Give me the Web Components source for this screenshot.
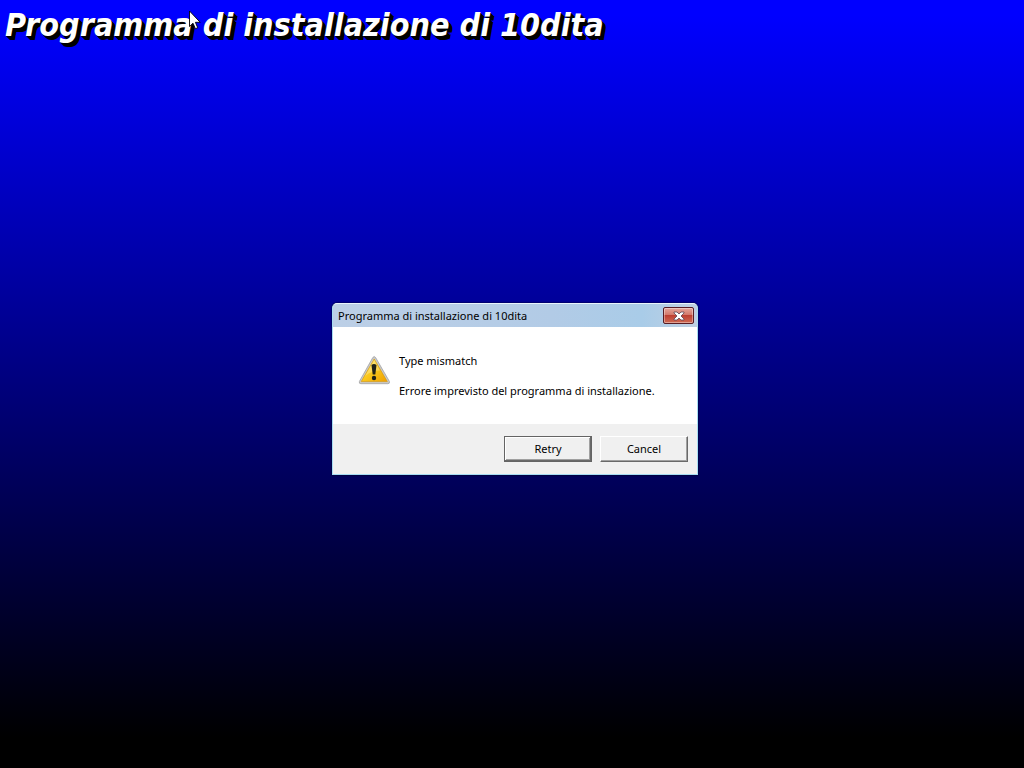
<!DOCTYPE html>
<html lang="it">
<head>
<meta charset="utf-8">
<title>Programma di installazione di 10dita</title>
<style>
  html, body { margin: 0; height: 100%; }
  body { overflow: hidden; font: 11px/16px "Noto Sans", "Open Sans", sans-serif; color: #000; }
</style>
</head>
<body>
<setup-screen>
  <setup-title slot="title">Programma di installazione di 10dita</setup-title>
  <message-dialog>
    <span slot="caption">Programma di installazione di 10dita</span>
    <warning-icon slot="icon"></warning-icon>
    <message-line>Type mismatch</message-line>
    <message-line>Errore imprevisto del programma di installazione.</message-line>
    <dialog-button slot="actions" default>Retry</dialog-button>
    <dialog-button slot="actions">Cancel</dialog-button>
  </message-dialog>
  <mouse-pointer slot="pointer"></mouse-pointer>
</setup-screen>

<script>
const define = (name, html) => {
  const template = document.createElement('template');
  template.innerHTML = html;
  customElements.define(name, class extends HTMLElement {
    constructor() {
      super();
      this.attachShadow({ mode: 'open' }).append(template.content.cloneNode(true));
    }
  });
};

define('setup-screen', `
  <style>
    :host {
      display: grid; position: relative; min-height: 100vh;
      background: linear-gradient(#00f 0, #00f 2%, #000 96%);
    }
    header, main { grid-area: 1 / 1; }
    header { padding: 6px 5px; }
    main { display: grid; place-items: center; padding: 10px 0 0 6px; }
  </style>
  <header><slot name="title"></slot></header>
  <main><slot></slot></main>
  <slot name="pointer"></slot>`);

define('setup-title', `
  <style>
    :host { display: block; }
    h1 {
      margin: 0; color: #fff;
      font: italic bold 32px/38px "DejaVu Sans Condensed", "DejaVu Sans", sans-serif;
      text-shadow: 1px 1px #000, 2px 2px #000, 3px 3px #000, 4px 4px #000;
    }
  </style>
  <h1><slot></slot></h1>`);

define('message-dialog', `
  <style>
    :host {
      display: block; box-sizing: border-box; width: 366px; max-width: 100%;
      border: 1px solid #a6dcf3; border-top-color: #e8f4fc; border-radius: 5px 5px 0 0;
      background: #fff; overflow: hidden;
      box-shadow: 0 0 2px #000;
    }
    .bar {
      display: flex; align-items: center; justify-content: space-between;
      height: 23px; padding: 0 3px 0 5px;
      background: linear-gradient(90deg, #bccfe6, #b2cbe6 60%, #a9cce8 85%, #bfd0e2);
    }
    button {
      display: grid; place-items: center; box-sizing: border-box;
      width: 31px; height: 17px; padding: 0;
      border: 1px solid #571d24; border-radius: 2px;
      background: linear-gradient(#e5a79c, #d3796b 45%, #bd4032 50%, #cf6a53);
      box-shadow: inset 0 0 0 1px #ffffff60;
    }
    .message { display: flex; gap: 8px; padding: 26px 25px 25px; }
    .text { display: grid; gap: 14px; }
    footer {
      display: flex; justify-content: flex-end; gap: 8px;
      padding: 12px 9px; background: #f0f0f0;
    }
  </style>
  <section role="alertdialog" aria-labelledby="caption">
    <div class="bar">
      <div id="caption"><slot name="caption"></slot></div>
      <button type="button" aria-label="Close">
        <svg width="12" height="10" viewBox="0 0 12 10" aria-hidden="true">
          <path d="M1 1h3l2 2 2-2h3v1L8 5l3 3v1H8L6 7 4 9H1V8l3-3-3-3z" fill="#fff" stroke="#5c4656" stroke-width=".8"/>
        </svg>
      </button>
    </div>
    <div class="message">
      <slot name="icon"></slot>
      <div class="text"><slot></slot></div>
    </div>
    <footer><slot name="actions"></slot></footer>
  </section>`);

define('message-line', `
  <style>:host { display: block; } p { margin: 0; }</style>
  <p><slot></slot></p>`);

define('warning-icon', `
  <style>:host { display: block; width: 33px; height: 32px; flex: none; } svg { display: block; }</style>
  <svg width="32" height="32" viewBox="0 0 32 32" aria-hidden="true">
    <defs>
      <linearGradient id="face" x1="0" y1="0" x2="1" y2="1">
        <stop offset=".2" stop-color="#ffe04a"/><stop offset=".5" stop-color="#fbc81c"/><stop offset="1" stop-color="#ee9f00"/>
      </linearGradient>
    </defs>
    <path d="M14.800 4.500q1.400-1.800 2.800 0L31.400 28.400q.6 2.300-1.600 2.300H2.800Q.8 30.700 1.400 28.400z" fill="#cacaca" stroke="#9a9a9a" stroke-width=".7"/>
    <path d="M16.200 6 29.300 28.600H3.200z" fill="url(#face)" stroke="#d79b10" stroke-width=".7"/>
    <path d="M16.200 7 22 17.500Q14 17.500 7 23z" fill="#fff" opacity=".25"/>
    <path d="M13.500 12q2.500-2 5 0l-1.200 9.600h-2.600z" fill="#222218"/>
    <circle cx="16" cy="25" r="2.200" fill="#222218"/>
  </svg>`);

define('dialog-button', `
  <style>
    :host { display: block; }
    button {
      box-sizing: border-box; width: 88px; height: 26px; padding: 0;
      font: inherit; color: inherit; background: #f0f0f0;
      border: 1px solid; border-color: #fff #696969 #696969 #fff; border-radius: 0;
      box-shadow: inset -1px -1px #a0a0a0;
    }
    :host([default]) button {
      border-color: #646464;
      box-shadow: inset -1px -1px #696969, inset 1px 1px #fff, inset -2px -2px #a0a0a0;
    }
  </style>
  <button type="button"><slot></slot></button>`);

define('mouse-pointer', `
  <style>
    :host { position: absolute; left: 189px; top: 10px; pointer-events: none; }
    svg { display: block; }
  </style>
  <svg width="12" height="20" viewBox="0 0 12 20" aria-hidden="true">
    <path d="M.5 1v15.500L4 13.200l2.400 5.500 2.300-1L6.400 12.300h4.800z" fill="#fff" stroke="#000" stroke-width=".9"/>
  </svg>`);
</script>
</body>
</html>
